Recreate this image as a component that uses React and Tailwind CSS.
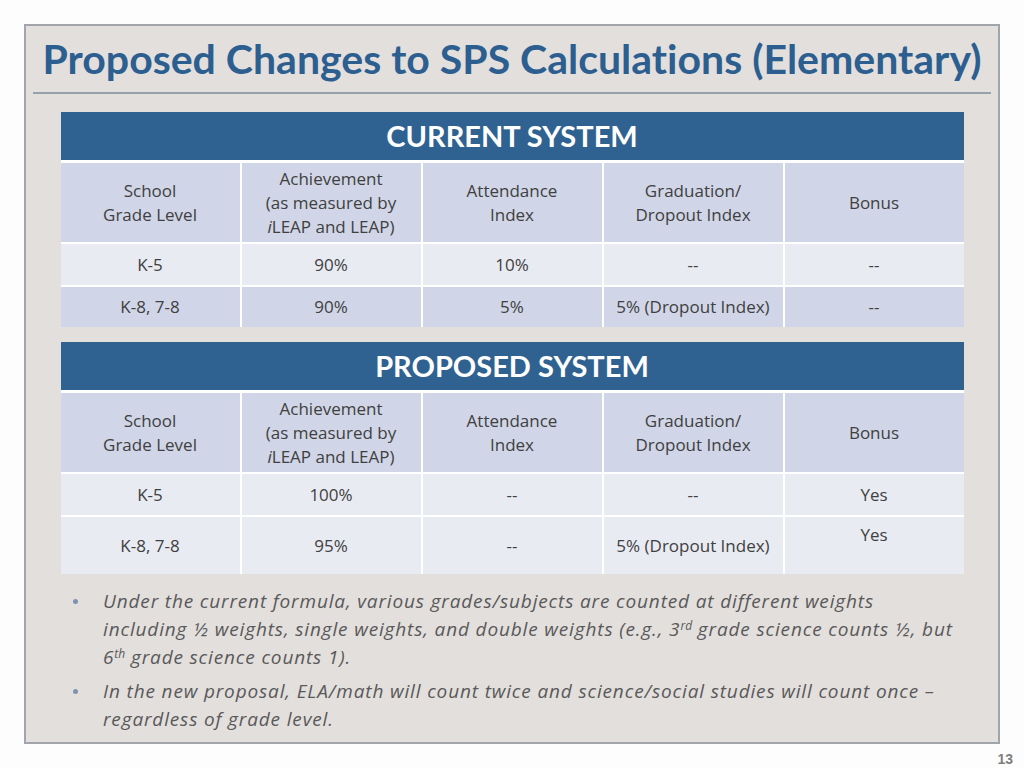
const headers = [
  ['School', 'Grade Level'],
  ['Achievement', '(as measured by', 'iLEAP'],
  ['Attendance', 'Index'],
  ['Graduation/', 'Dropout Index'],
  ['Bonus'],
]

const currentRows = [
  { bg: 'bg-[#e9ebf3]', h: 'h-[41px]', cells: ['K-5', '90%', '10%', '--', '--'] },
  { bg: 'bg-[#d0d6e7]', h: 'h-[40px]', cells: ['K-8, 7-8', '90%', '5%', '5% (Dropout Index)', '--'] },
]

const proposedRows = [
  { bg: 'bg-[#e9ebf3]', h: 'h-[41px]', cells: ['K-5', '100%', '--', '--', 'Yes'] },
  { bg: 'bg-[#e9ebf3]', h: 'h-[57px]', cells: ['K-8, 7-8', '95%', '--', '5% (Dropout Index)', 'Yes'], topLast: true },
]

function HeaderCell({ lines }) {
  return (
    <div className="bg-[#d0d6e7] h-[79px] flex flex-col items-center justify-center leading-[24px]">
      {lines.map((l) =>
        l === 'iLEAP' ? (
          <span key={l}>
            <i>i</i>LEAP and LEAP)
          </span>
        ) : (
          <span key={l}>{l}</span>
        )
      )}
    </div>
  )
}

function SystemTable({ title, rows }) {
  return (
    <div className="w-[903px] mx-auto bg-white flex flex-col gap-[2px] font-['Open_Sans',sans-serif] text-[17px] text-[#404040]">
      <div className="h-[48px] bg-[#2f6291] flex items-center justify-center text-white font-['Lato',sans-serif] font-bold text-[29px] mb-[1px]">
        {title}
      </div>
      <div className="grid grid-cols-5 gap-[2px]">
        {headers.map((lines, i) => (
          <HeaderCell key={i} lines={lines} />
        ))}
      </div>
      {rows.map((row, r) => (
        <div key={r} className="grid grid-cols-5 gap-[2px]">
          {row.cells.map((c, i) => (
            <div
              key={i}
              className={`${row.bg} ${row.h} flex justify-center ${
                row.topLast && i === 4 ? 'items-start pt-[5px]' : 'items-center'
              }`}
            >
              {c}
            </div>
          ))}
        </div>
      ))}
    </div>
  )
}

export default function App() {
  return (
    <div className="w-[1024px] h-[768px] bg-[#fdfdfd] pt-[24px] pl-[24px] font-['Lato',sans-serif]">
      <div className="w-[976px] h-[720px] border-2 border-[#a2a6ac] bg-[#e3dfdd] flex flex-col">
        {/* Title */}
        <div className="h-[66px] flex items-center justify-center text-[41px] font-bold text-[#2d5e90] [font-variant-ligatures:none]">
          Proposed Changes to SPS Calculations (Elementary)
        </div>
        <div className="mx-[7px] h-[2px] bg-[#97a1ac]" />

        <div className="mt-[18px]">
          <SystemTable title="CURRENT SYSTEM" rows={currentRows} />
        </div>
        <div className="mt-[15px]">
          <SystemTable title="PROPOSED SYSTEM" rows={proposedRows} />
        </div>

        {/* Notes */}
        <ul className="mt-[13px] ml-[44px] flex flex-col gap-[6px] font-['Open_Sans',sans-serif] text-[19px] tracking-[0.85px] italic text-[#595959] leading-[28px]">
          <li className="flex">
            <div className="w-[33px] h-[28px] flex items-center pl-[3px]">
              <div className="w-[5px] h-[5px] rounded-full bg-[#7d93b0]" />
            </div>
            <p>
              Under the current formula, various grades/subjects are counted at different weights
              <br />
              including ½ weights, single weights, and double weights (e.g., 3
              <sup className="text-[12px] tracking-normal">rd</sup> grade science counts ½, but
              <br />
              6<sup className="text-[12px] tracking-normal">th</sup> grade science counts 1).
            </p>
          </li>
          <li className="flex">
            <div className="w-[33px] h-[28px] flex items-center pl-[3px]">
              <div className="w-[5px] h-[5px] rounded-full bg-[#7d93b0]" />
            </div>
            <p>
              In the new proposal, ELA/math will count twice and science/social studies will count once –
              <br />
              regardless of grade level.
            </p>
          </li>
        </ul>
      </div>
      <div className="w-[989px] text-right mt-[5px] text-[14px] font-['Liberation_Sans',sans-serif] font-bold text-[#7f7f7f]">
        13
      </div>
    </div>
  )
}
